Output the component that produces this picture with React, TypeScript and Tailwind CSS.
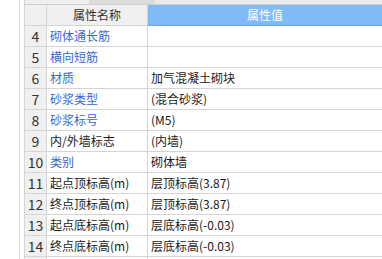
const rows: { no: number; name: string; value: string; link: boolean }[] = [
  { no: 4, name: "砌体通长筋", value: "", link: true },
  { no: 5, name: "横向短筋", value: "", link: true },
  { no: 6, name: "材质", value: "加气混凝土砌块", link: true },
  { no: 7, name: "砂浆类型", value: "(混合砂浆)", link: true },
  { no: 8, name: "砂浆标号", value: "(M5)", link: true },
  { no: 9, name: "内/外墙标志", value: "(内墙)", link: false },
  { no: 10, name: "类别", value: "砌体墙", link: true },
  { no: 11, name: "起点顶标高(m)", value: "层顶标高(3.87)", link: false },
  { no: 12, name: "终点顶标高(m)", value: "层顶标高(3.87)", link: false },
  { no: 13, name: "起点底标高(m)", value: "层底标高(-0.03)", link: false },
  { no: 14, name: "终点底标高(m)", value: "层底标高(-0.03)", link: false },
];

const font = { fontFamily: '"Noto Sans CJK SC", "Noto Sans", sans-serif' };

export default function App() {
  return (
    <div className="flex h-[259px] w-[382px] overflow-hidden bg-white" style={font}>
      {/* left pane edge */}
      <div className="w-[20px] shrink-0 border-r border-[#d6d6d6] bg-white" />
      <div className="w-[5px] shrink-0 border-r border-[#d6d6d6] bg-white" />

      <div className="flex min-w-0 flex-1 flex-col">
        {/* previous row, scrolled out */}
        <div className="flex h-[5px] shrink-0 border-b border-[#cfcfcf]">
          <div className="w-[64px] bg-[#efefef]" />
          <div className="w-[66px] bg-[#dcdcdc]" />
          <div className="flex-1 bg-[#ebebeb]" />
        </div>

        {/* header */}
        <div className="flex h-[21px] shrink-0">
          <div className="w-[22px] border-r border-b border-[#d4d4d4] bg-[#f0f0f0]" />
          <div className="flex w-[101px] items-center justify-center border-r border-b border-[#d4d4d4] bg-[#f0f0f0] text-[12px] text-[#333]">
            属性名称
          </div>
          <div className="flex flex-1 items-center justify-center border-b border-[#6ea6e4] bg-[#80bbf7] text-[12px] text-white">
            属性值
          </div>
        </div>

        {rows.map((r) => (
          <div key={r.no} className="flex h-[21px] shrink-0">
            <div className="flex w-[22px] items-center justify-center border-r border-b border-[#d4d4d4] bg-[#f0f0f0] text-[14px] text-[#333]">
              {r.no}
            </div>
            <div
              className={
                "flex w-[101px] items-center whitespace-nowrap border-r border-b border-[#d4d4d4] pl-[3px] text-[12px] " +
                (r.link ? "text-[#3b66d8]" : "text-[#1a1a1a]")
              }
            >
              {r.name}
            </div>
            <div className="flex flex-1 items-center whitespace-nowrap border-b border-[#d4d4d4] pl-[3px] text-[12px] text-[#1a1a1a]">
              {r.value}
            </div>
          </div>
        ))}

        <div className="flex h-[4px] shrink-0">
          <div className="w-[22px] border-r border-[#d4d4d4] bg-[#f0f0f0]" />
          <div className="w-[101px] border-r border-[#d4d4d4]" />
          <div className="flex-1" />
        </div>
      </div>
    </div>
  );
}
